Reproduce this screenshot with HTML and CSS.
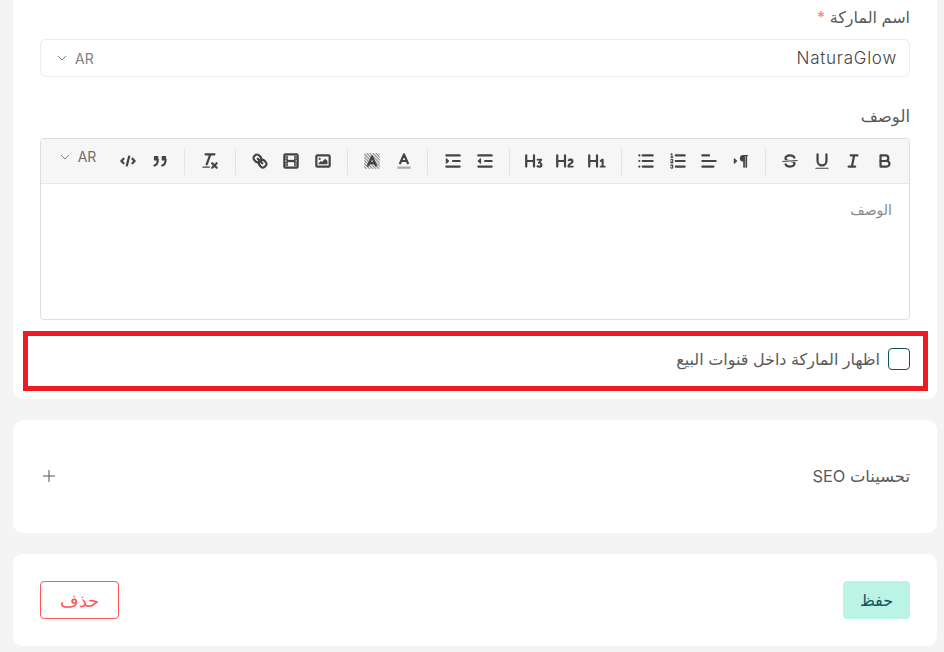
FILE: index.html
```html
<!DOCTYPE html>
<html lang="ar" dir="rtl">
<head>
<meta charset="utf-8">
<title>الماركة</title>
<link rel="stylesheet" href="styles.css">
</head>
<body>
<svg class="defs" width="0" height="0" aria-hidden="true">
  <defs>
    <pattern id="hatch" width="2" height="2" patternUnits="userSpaceOnUse" patternTransform="rotate(45)"><rect width="2" height="1" class="hatch-line"/></pattern>
    <symbol id="i-bold" viewBox="0 0 18 18"><path class="s" d="M5,4H9.5A2.5,2.5,0,0,1,12,6.5v0A2.5,2.5,0,0,1,9.5,9H5V4Z"/><path class="s" d="M5,9h5.5A2.5,2.5,0,0,1,13,11.5v0A2.5,2.5,0,0,1,10.5,14H5V9Z"/></symbol>
    <symbol id="i-italic" viewBox="0 0 18 18"><path class="s" d="M7,4H13M5,14H11M8,14L10,4"/></symbol>
    <symbol id="i-underline" viewBox="0 0 18 18"><path class="s" d="M5,3V9a4,4,0,0,0,4,4H9a4,4,0,0,0,4-4V3"/><rect class="f" x="3" y="15" width="12" height="1" rx=".5"/></symbol>
    <symbol id="i-strike" viewBox="0 0 18 18"><path class="s thin" d="M15.5,8.5 2.5,9.5"/><path class="f" d="M9.007,8C6.542,7.791,6,7.519,6,6.5,6,5.792,7.283,5,9,5c1.571,0,2.765.679,2.969,1.309a1,1,0,0,0,1.9-.617C13.356,4.106,11.354,3,9,3,6.2,3,4,4.538,4,6.5a3.2,3.2,0,0,0,.5,1.843Z"/><path class="f" d="M8.984,10C11.457,10.208,12,10.479,12,11.5c0,.708-1.283,1.5-3,1.5-1.571,0-2.765-.679-2.969-1.309a1,1,0,1,0-1.9.617C4.644,13.894,6.646,15,9,15c2.8,0,5-1.538,5-3.5a3.2,3.2,0,0,0-.5-1.843Z"/></symbol>
    <symbol id="i-rtl" viewBox="0 0 18 18"><polygon class="f sf" points="3 11 5 9 3 7"/><path class="s thin" d="M15,4H11"/><path class="f" d="M11,3.5a3,3,0,0,0,0,6h1v-6H11Z"/><rect class="f" height="11" width="1.5" x="11" y="4"/><rect class="f" height="11" width="1.5" x="13" y="4"/></symbol>
    <symbol id="i-align" viewBox="0 0 18 18"><path class="s" d="M3,4H9M3,9H15M3,14H13"/></symbol>
    <symbol id="i-ordered" viewBox="0 0 18 18"><path class="s" d="M7,4H15M7,9H15M7,14H15"/><path class="s thin" d="M2.5,5.5H4.5"/><path class="f" d="M3.5,6A0.5,0.5,0,0,1,3,5.5V3.085l-0.276.138A0.5,0.5,0,0,1,2.053,3c-0.124-.247-0.023-0.324.224-0.447l1-.5A0.5,0.5,0,0,1,4,2.5v3A0.5,0.5,0,0,1,3.5,6Z"/><path class="s thin" d="M4.5,10.5h-2c0-.234,1.85-1.076,1.85-2.234A0.959,0.959,0,0,0,2.5,8.156"/><path class="s thin" d="M2.5,14.846a0.959,0.959,0,0,0,1.85-.109A0.7,0.7,0,0,0,3.75,14a0.688,0.688,0,0,0,.6-0.736,0.959,0.959,0,0,0-1.85-.109"/></symbol>
    <symbol id="i-bullet" viewBox="0 0 18 18"><path class="s" d="M6,4H15M6,9H15M6,14H15M3,4H3M3,9H3M3,14H3"/></symbol>
    <symbol id="i-h1" viewBox="0 0 18 18"><path class="f" d="M10,4V14a1,1,0,0,1-2,0V10H3v4a1,1,0,0,1-2,0V4A1,1,0,0,1,3,4V8H8V4a1,1,0,0,1,2,0Zm6.06787,9.209H14.98975V7.59863a.54085.54085,0,0,0-.605-.60547h-.62744a1.01119,1.01119,0,0,0-.748.29688L11.645,8.56641a.5435.5435,0,0,0-.022.8584l.28613.30762a.53861.53861,0,0,0,.84717.0332l.09912-.08789a1.2137,1.2137,0,0,0,.2417-.35254h.02246s-.01123.30859-.01123.60547V13.209H12.041a.54085.54085,0,0,0-.605.60547v.43945a.54085.54085,0,0,0,.605.60547h4.02686a.54085.54085,0,0,0,.605-.60547v-.43945A.54085.54085,0,0,0,16.06787,13.209Z"/></symbol>
    <symbol id="i-h2" viewBox="0 0 18 18"><path class="f" d="M16.73975,13.81445v.43945a.54085.54085,0,0,1-.605.60547H11.855a.58392.58392,0,0,1-.64893-.60547V14.0127c0-2.90527,3.39941-3.42187,3.39941-4.55469a.77675.77675,0,0,0-.84717-.78125,1.17684,1.17684,0,0,0-.83594.38477c-.2749.26367-.561.374-.85791.13184l-.4292-.34082c-.30811-.24219-.38525-.51758-.1543-.81445a2.97155,2.97155,0,0,1,2.45361-1.17676,2.45393,2.45393,0,0,1,2.68408,2.40918c0,2.45312-3.1792,2.92676-3.27832,3.93848h2.79443A.54085.54085,0,0,1,16.73975,13.81445ZM9,3A.99974.99974,0,0,0,8,4V8H3V4A1,1,0,0,0,1,4V14a1,1,0,0,0,2,0V10H8v4a1,1,0,0,0,2,0V4A.99974.99974,0,0,0,9,3Z"/></symbol>
    <symbol id="i-h3" viewBox="0 0 18 18"><path class="f" d="M16.65186,12.30664a2.6742,2.6742,0,0,1-2.915,2.68457,3.96592,3.96592,0,0,1-2.25537-.6709.56007.56007,0,0,1-.13232-.83594L11.64648,13c.209-.34082.48389-.36328.82471-.1543a2.32654,2.32654,0,0,0,1.12256.33008c.71484,0,1.12207-.35156,1.12207-.78125,0-.61523-.61621-.86816-1.46338-.86816H13.2085a.65159.65159,0,0,1-.68213-.41895l-.05518-.10937a.67114.67114,0,0,1,.14307-.78125l.71533-.86914a8.55289,8.55289,0,0,1,.68213-.7373V8.58887a3.93913,3.93913,0,0,1-.748.05469H11.9873a.54085.54085,0,0,1-.605-.60547V7.59863a.54085.54085,0,0,1,.605-.60547h3.75146a.53773.53773,0,0,1,.60547.59375v.17676a1.03723,1.03723,0,0,1-.27539.748L14.74854,10.0293A2.31132,2.31132,0,0,1,16.65186,12.30664ZM9,3A.99974.99974,0,0,0,8,4V8H3V4A1,1,0,0,0,1,4V14a1,1,0,0,0,2,0V10H8v4a1,1,0,0,0,2,0V4A.99974.99974,0,0,0,9,3Z"/></symbol>
    <symbol id="i-indent" viewBox="0 0 18 18"><path class="s" d="M3,14H15M3,4H15M9,9H15"/><polygon class="f sf" points="3 7 3 11 5 9"/></symbol>
    <symbol id="i-outdent" viewBox="0 0 18 18"><path class="s" d="M3,14H15M3,4H15M9,9H15"/><polygon class="f sf" points="5 7 5 11 3 9"/></symbol>
    <symbol id="i-color" viewBox="0 0 18 18"><path class="s" d="M5.5,11 9,3 12.5,11M11.63,9H6.38"/><rect class="under" x="3" y="14" width="12" height="2"/></symbol>
    <symbol id="i-bg" viewBox="0 0 18 18"><rect x="2" y="2" width="14" height="14" fill="url(#hatch)"/><path class="s" d="M5.5,13 9,5 12.5,13M11.63,11H6.38"/></symbol>
    <symbol id="i-image" viewBox="0 0 18 18"><rect class="s" x="3" y="4" width="12" height="10" rx="1"/><circle class="f" cx="6" cy="7" r="1"/><polyline class="f" points="5 12 5 11 7 9 8 10 11 7 13 9 13 12 5 12"/></symbol>
    <symbol id="i-video" viewBox="0 0 18 18"><rect class="s" x="3" y="3" width="12" height="12" rx="1"/><rect class="f" x="5" y="4" width="1" height="10"/><rect class="f" x="12" y="4" width="1" height="10"/><rect class="f" x="5" y="8" width="8" height="2"/><rect class="f" x="3" y="5" width="3" height="1"/><rect class="f" x="3" y="7" width="3" height="1"/><rect class="f" x="3" y="10" width="3" height="1"/><rect class="f" x="3" y="12" width="3" height="1"/><rect class="f" x="12" y="5" width="3" height="1"/><rect class="f" x="12" y="7" width="3" height="1"/><rect class="f" x="12" y="10" width="3" height="1"/><rect class="f" x="12" y="12" width="3" height="1"/></symbol>
    <symbol id="i-link" viewBox="0 0 18 18"><path class="s" d="M7,7 11,11"/><path class="s" d="M8.9,4.577a3.476,3.476,0,0,1,.36,4.679A3.476,3.476,0,0,1,4.577,8.9C3.185,7.5,2.035,6.4,4.217,4.217S7.5,3.185,8.9,4.577Z"/><path class="s" d="M13.423,9.1a3.476,3.476,0,0,0-4.679-.36,3.476,3.476,0,0,0,.36,4.679c1.392,1.392,2.5,2.542,4.679.36S14.815,10.5,13.423,9.1Z"/></symbol>
    <symbol id="i-clean" viewBox="0 0 18 18"><path class="s" d="M5,3H13M6,12 9.35,3M11,11 15,15M15,11 11,15"/><rect class="f" x="2" y="14" width="7" height="1" rx=".5"/></symbol>
    <symbol id="i-quote" viewBox="0 0 18 18"><rect class="f sf" x="4" y="5" width="3" height="3"/><rect class="f sf" x="11" y="5" width="3" height="3"/><path class="s" d="M7,8c0,4.031-3,5-3,5M14,8c0,4.031-3,5-3,5"/></symbol>
    <symbol id="i-code" viewBox="0 0 18 18"><path class="s" d="M5,7 3,9 5,11M13,7 15,9 13,11M10,5 8,13"/></symbol>
  </defs>
</svg>

<main class="page">
  <section class="card card-main">
    <div class="field field-name">
      <label class="label">اسم الماركة <span class="req">*</span></label>
      <div class="input">
        <span class="value">NaturaGlow</span>
        <span class="lang lang-input"><span>AR</span><svg class="chev" viewBox="0 0 10 6"><path d="M1,1 5,5 9,1"/></svg></span>
      </div>
    </div>

    <div class="field field-desc">
      <label class="label">الوصف</label>
      <div class="editor">
        <div class="toolbar">
          <div class="group">
            <button class="tb"><svg class="ic"><use href="#i-bold"/></svg></button>
            <button class="tb"><svg class="ic"><use href="#i-italic"/></svg></button>
            <button class="tb"><svg class="ic"><use href="#i-underline"/></svg></button>
            <button class="tb"><svg class="ic"><use href="#i-strike"/></svg></button>
          </div>
          <div class="group">
            <button class="tb"><svg class="ic"><use href="#i-rtl"/></svg></button>
            <button class="tb"><svg class="ic"><use href="#i-align"/></svg></button>
            <button class="tb"><svg class="ic"><use href="#i-ordered"/></svg></button>
            <button class="tb"><svg class="ic"><use href="#i-bullet"/></svg></button>
          </div>
          <div class="group">
            <button class="tb"><svg class="ic"><use href="#i-h1"/></svg></button>
            <button class="tb"><svg class="ic"><use href="#i-h2"/></svg></button>
            <button class="tb"><svg class="ic"><use href="#i-h3"/></svg></button>
          </div>
          <div class="group group-indent">
            <button class="tb"><svg class="ic"><use href="#i-outdent"/></svg></button>
            <button class="tb"><svg class="ic"><use href="#i-indent"/></svg></button>
          </div>
          <div class="group">
            <button class="tb"><svg class="ic"><use href="#i-color"/></svg></button>
            <button class="tb"><svg class="ic"><use href="#i-bg"/></svg></button>
          </div>
          <div class="group">
            <button class="tb"><svg class="ic"><use href="#i-image"/></svg></button>
            <button class="tb"><svg class="ic"><use href="#i-video"/></svg></button>
            <button class="tb"><svg class="ic"><use href="#i-link"/></svg></button>
          </div>
          <div class="group group-clean">
            <button class="tb"><svg class="ic"><use href="#i-clean"/></svg></button>
          </div>
          <div class="group group-last">
            <button class="tb"><svg class="ic"><use href="#i-quote"/></svg></button>
            <button class="tb"><svg class="ic"><use href="#i-code"/></svg></button>
          </div>
          <span class="lang lang-editor"><span>AR</span><svg class="chev" viewBox="0 0 10 6"><path d="M1,1 5,5 9,1"/></svg></span>
        </div>
        <div class="editor-body">الوصف</div>
      </div>
    </div>

    <div class="check-row">
      <span class="checkbox"></span>
      <span class="check-label">اظهار الماركة داخل قنوات البيع</span>
      <span class="highlight"></span>
    </div>
  </section>

  <section class="card card-seo">
    <span class="seo-title">تحسينات SEO</span>
    <svg class="plus" viewBox="0 0 12 12"><path d="M6,0V12M0,6H12"/></svg>
  </section>

  <section class="card card-actions">
    <button class="btn btn-save">حفظ</button>
    <button class="btn btn-delete">حذف</button>
  </section>
</main>
</body>
</html>
```
FILE: styles.css
```css
* { box-sizing: border-box; }
html, body { margin: 0; padding: 0; }
body {
  background: #f4f4f4;
  color: #5a5a5a;
  font-family: "Inter", "Noto Sans", "DejaVu Sans", sans-serif;
  font-size: 16px;
  overflow: hidden;
}
.defs { position: absolute; }
.page { width: 924px; margin-inline-start: 7px; display: flex; flex-direction: column; gap: 21px; }
.card { background: #fff; border-radius: 10px; padding-inline: 27px; }
.card-main { border-radius: 0 0 10px 10px; height: 399px; padding-top: 6px; position: relative; }

.label { display: block; height: 22px; line-height: 22px; font-size: 16.5px; }
.req { color: #f77; }
.field-name .label { margin-bottom: 11px; font-size: 16px; }
.field-desc { margin-top: 28px; }
.field-desc .label { height: 22px; margin-bottom: 11px; }

.input {
  height: 38px;
  border: 1px solid #ebebeb;
  border-radius: 6px;
  display: flex;
  align-items: center;
  justify-content: space-between;
  padding-inline: 12px 16px;
}
.value { font-size: 17px; font-weight: 300; letter-spacing: .75px; color: #444; }
.lang { display: flex; align-items: center; gap: 8px; color: #808080; font-size: 14px; }
.chev { width: 10px; height: 6px; fill: none; stroke: #808080; stroke-width: 1; }

.editor { height: 182px; border: 1px solid #ddd; border-radius: 4px; overflow: hidden; }
.toolbar {
  height: 45px;
  background: #f6f6f6;
  border-bottom: 1px solid #e8e8e8;
  display: flex;
  align-items: center;
}
.group {
  display: flex;
  padding-inline: 8.17px;
  height: 27px;
  align-items: center;
  border-inline-end: 1px solid #e4e4e4;
}
.group-indent { padding-inline-end: 8.9px; }
.group-clean { padding-inline: 9px; }
.group-last { border: 0; }
.tb {
  width: 31.67px;
  height: 27px;
  border: 0;
  padding: 0;
  background: none;
  display: flex;
  align-items: center;
  justify-content: center;
}
.ic { width: 20px; height: 20px; display: block; }
.s { fill: none; stroke: #444; stroke-width: 2; stroke-linecap: round; stroke-linejoin: round; }
.thin { stroke-width: 1; }
.f { fill: #444; }
.sf { stroke: #444; stroke-width: 1; stroke-linejoin: round; }
.under { fill: #aaa; }
.hatch-line { fill: #888; }
.lang-editor { margin-inline-start: 8px; margin-top: -9px; color: #707070; }
.editor-body { padding: 16px 17px; font-size: 14px; color: #888; line-height: 20px; }

.check-row {
  display: flex;
  align-items: center;
  gap: 8px;
  margin-top: 28px;
  height: 22px;
}
.checkbox { width: 22px; height: 22px; border: 1px solid #0e5560; border-radius: 4px; flex: none; }
.check-label { font-size: 16px; }
.highlight {
  position: absolute;
  left: 10px;
  right: 9px;
  top: 331px;
  height: 60px;
  border: 5px solid #ed1c24;
}

.card-seo {
  height: 113px;
  display: flex;
  align-items: center;
  justify-content: space-between;
  padding-inline: 27px 30px;
  padding-bottom: 2px;
}
.seo-title { font-size: 16.4px; }
.plus { width: 12px; height: 12px; fill: none; stroke: #555; stroke-width: 1; }

.card-actions {
  height: 92px;
  display: flex;
  align-items: center;
  justify-content: space-between;
}
.btn {
  height: 38px;
  border-radius: 4px;
  font-family: inherit;
  font-size: 16px;
  padding: 0;
}
.btn-save { width: 67px; background: #bbf3e5; color: #0e5560; border: 0; }
.btn-delete { width: 79px; background: #fff; color: #f55; border: 1px solid #f55; font-size: 18px; font-weight: 300; }
```
